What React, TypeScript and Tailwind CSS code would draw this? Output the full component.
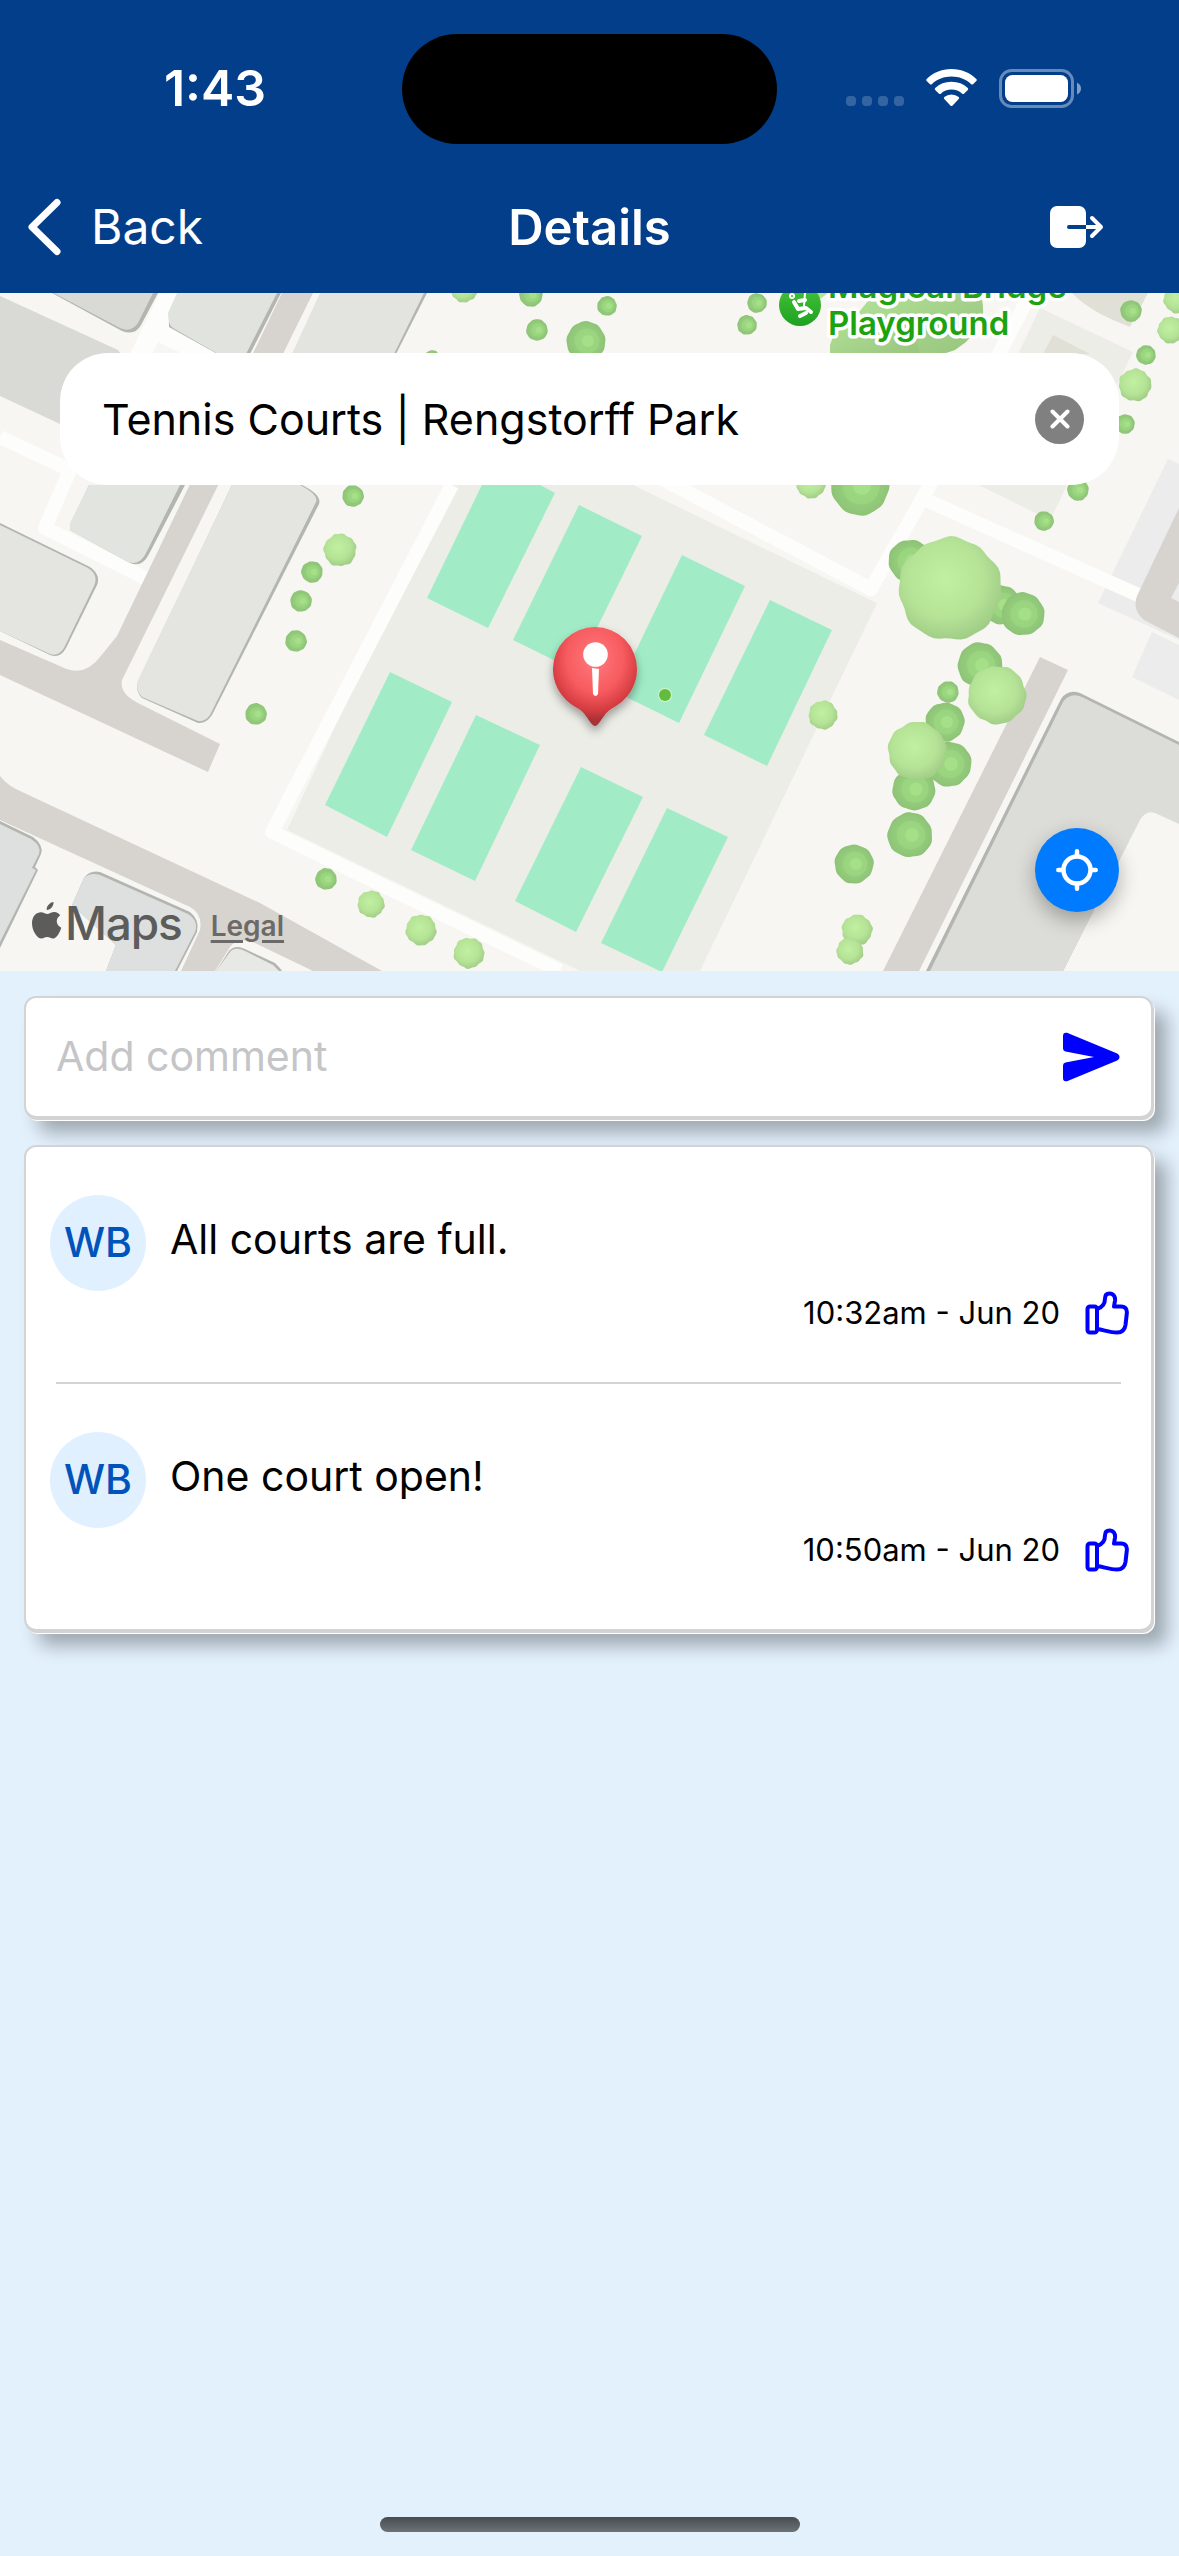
import React from 'react';

type Tree = [x: number, y: number, r: number];

const CONIFERS: Tree[] = [
  [353, 496, 11], [312, 572, 11], [301, 601, 11], [296, 641, 11], [256, 714, 11], [326, 879, 11],
  [531, 295, 12], [537, 330, 11], [607, 306, 10], [586, 341, 20], [757, 303, 10], [747, 325, 10], [432, 358, 8],
  [860, 486, 30], [1131, 311, 11], [1146, 355, 10], [1125, 424, 10], [1078, 490, 11], [1044, 521, 10],
  [910, 561, 22], [1002, 605, 20], [1023, 614, 22], [980, 665, 23], [948, 692, 11], [945, 722, 20],
  [949, 764, 23], [914, 789, 22], [910, 835, 23], [854, 864, 20],
];

const BROADLEAVES: Tree[] = [
  [340, 550, 17], [371, 904, 14], [421, 930, 16], [469, 953, 16], [464, 289, 14], [811, 484, 15],
  [1178, 299, 15], [1171, 330, 14], [1135, 385, 17], [950, 589, 53], [997, 695, 30], [917, 751, 30],
  [823, 715, 15], [857, 930, 16], [850, 951, 14],
];

const COURTS = [
  '494,460 555,493 488,628 427,598',
  '579,505 642,536 576,671 513,640',
  '682,555 745,586 679,723 616,692',
  '770,600 832,630 767,766 704,735',
  '390,672 452,702 387,837 325,805',
  '476,715 540,745 475,881 411,850',
  '581,767 643,797 576,932 515,901',
  '667,808 728,837 662,972 601,943',
];

function crown([cx, cy, r]: Tree, lobes: number, depth: number) {
  const points: string[] = [];
  for (let i = 0; i < 60; i++) {
    const a = (i / 60) * Math.PI * 2;
    const k = r * (1 - depth + depth * Math.sin(a * lobes + cx) * Math.cos(a * 3 + cy));
    points.push(`${(cx + k * Math.cos(a)).toFixed(1)},${(cy + k * Math.sin(a)).toFixed(1)}`);
  }
  return points.join(' ');
}

function MapCanvas() {
  return (
    <svg
      className="absolute inset-0 h-full w-full"
      viewBox="0 293 1179 678"
      preserveAspectRatio="xMidYMid slice"
      role="img"
      aria-label="Map of the tennis courts at Rengstorff Park"
    >
      <defs>
        <radialGradient id="conifer" cx="0.5" cy="0.5" r="0.52">
          <stop offset="0" stopColor="#a9e08b" />
          <stop offset="0.3" stopColor="#9ad37f" />
          <stop offset="1" stopColor="#8dc276" />
        </radialGradient>
        <radialGradient id="leafy" cx="0.45" cy="0.42" r="0.6">
          <stop offset="0" stopColor="#c1f0a1" />
          <stop offset="0.6" stopColor="#b6e497" />
          <stop offset="1" stopColor="#a0cc86" />
        </radialGradient>
        <linearGradient id="grove" x1="0" y1="0" x2="1" y2="1">
          <stop offset="0" stopColor="#b4e297" />
          <stop offset="1" stopColor="#96c47e" />
        </linearGradient>
        <radialGradient id="pin" cx="0.5" cy="0.32" r="0.62">
          <stop offset="0" stopColor="#ff7a7e" />
          <stop offset="0.55" stopColor="#f75b5f" />
          <stop offset="0.85" stopColor="#d43c41" />
          <stop offset="1" stopColor="#a83036" />
        </radialGradient>
        <linearGradient id="poi" x1="0" y1="0" x2="0" y2="1">
          <stop offset="0" stopColor="#47c43a" />
          <stop offset="1" stopColor="#1ea021" />
        </linearGradient>
        <filter id="pinShadow" x="-30%" y="-30%" width="160%" height="160%">
          <feDropShadow dx="0" dy="5" stdDeviation="5" floodOpacity="0.35" />
        </filter>
      </defs>

      <rect y="293" width="1179" height="678" fill="#f7f6f2" />

      <g fill="#ecede7">
        <path d="M448 485L287 830L580 971H700L877 603L637 487L560 440Z" />
        <path d="M1040 308L1133 352L1050 520L960 476Z" />
      </g>
      <path d="M1072 293C1088 310 1110 319 1130 327L1148 293ZM1053 335L1090 354H1043Z" fill="#e0e0d6" />
      <g fill="#ececed">
        <path d="M1168 459L1179 464V640L1098 603Z" />
        <path d="M1152 632L1179 645V700L1132 677Z" />
      </g>

      <g fill="none" stroke="#fdfdfb" strokeWidth="14" strokeLinejoin="round">
        <path d="M175 285L138 360M152 328L260 380" strokeWidth="20" />
        <path d="M0 437L70 470L45 528L145 578M70 470L90 440" />
        <path d="M452 485L272 832L560 971" />
        <path d="M655 475L871 589L930 485L1035 285M926 500L1145 598" />
        <path d="M0 288L125 347" stroke="#f7f6f2" />
      </g>

      <g fill="#d7d3cf">
        <path d="M282 293H313L122 680Q119 694 140 704L220 744L208 772L0 675V640L62 667Q84 678 100 657L117 636Z" />
        <path d="M0 776Q8 786 20 791L260 903L382 971H313L255 943Q238 936 230 947L215 971H181L200 930Q203 914 190 907L0 820Z" />
        <path d="M1040 657L1068 670L919 971H883Z" />
        <path d="M1179 508L1137 596Q1132 610 1144 620L1179 638V602L1171 598L1179 583Z" />
      </g>

      <g fill="#b3b5b0">
        <path d="M52 293L122 331Q135 336 141 325L158 293Z" />
        <path d="M178 293L169 313V327L221 356H249L281 293Z" />
        <path d="M322 293L293 356H395L427 293Z" />
        <path d="M232 485H302Q322 495 319 504L212 715Q206 724 198 723L142 698Q135 691 138 682Z" />
        <path d="M89 485L70 525V530L130 563Q142 568 149 554L185 485Z" />
        <path d="M0 523L90 567Q101 575 97 585L66 648Q60 659 50 655L0 631Z" />
        <path d="M0 821L33 837Q44 845 41 854L35 867L38 870L0 948Z" />
        <path d="M84 878Q90 870 100 872L190 912Q200 920 197 932L177 971H106L116 945L72 905Z" />
        <path d="M216 971L229 951Q235 944 245 949L275 963Q281 969 282 971Z" />
        <path d="M1179 742L1080 693Q1068 689 1061 699L926 971H1063L1140 818Q1146 808 1155 811L1179 821Z" />
      </g>
      <path d="M50 291L120 328Q131 333 138 323L154 291Z" fill="#d9dad5" />
      <path d="M0 296L118 350Q125 357 119 366L60 424L0 396Z" fill="#d9dad5" />
      <path d="M178 291L168 313Q168 325 173 328L218 354H246L278 291Z" fill="#e1e3de" />
      <path d="M321 291L291 356H393L425 291Z" fill="#e3e4df" />
      <path d="M232 485H300Q319 495 316 502L210 715Q205 722 198 721L142 697Q135 690 138 680Z" fill="#e4e5e0" />
      <path d="M89 485L70 523V530L128 562Q140 566 146 553L180 485Z" fill="#e2e4df" />
      <path d="M0 525L88 568Q99 575 94 586L64 648Q58 657 50 654L0 631Z" fill="#e4e5e0" />
      <path d="M0 824L31 839Q42 846 39 854L32 868L36 870L0 942Z" fill="#dde0df" />
      <path d="M84 878Q90 872 100 875L188 914Q199 921 195 932L175 971H106L116 945L72 905Z" fill="#dde0df" />
      <path d="M216 971L230 952Q235 946 245 951L273 965L279 971Z" fill="#e8e8e4" />
      <path d="M1179 745L1082 697Q1070 692 1063 702L930 971H1063L1140 820Q1146 810 1155 813L1179 824Z" fill="#dcddd8" />

      <g fill="#a1ecc7">
        {COURTS.map((points) => (
          <polygon key={points} points={points} />
        ))}
      </g>

      {CONIFERS.map((tree) => (
        <g key={tree.join()}>
          <polygon points={crown(tree, 6, 0.03)} fill="url(#conifer)" />
          <circle cx={tree[0] + 1} cy={tree[1]} r={tree[2] * 0.62} fill="#9bd780" opacity="0.7" />
          <circle cx={tree[0] + 2} cy={tree[1]} r={tree[2] * 0.3} fill="#a5df88" />
        </g>
      ))}
      {BROADLEAVES.map((tree) => (
        <polygon key={tree.join()} points={crown(tree, 8, tree[2] > 25 ? 0.035 : 0.05)} fill="url(#leafy)" />
      ))}
      <path d="M812 293L820 299L828 293Z" fill="#b4e297" />
      <path d="M859 312L872 296L895 285H975Q984 297 983 313Q978 330 966 342L955 350L940 355H915L880 340Z" fill="url(#grove)" />
      <path d="M830 358V345Q834 330 846 322L880 314Q905 318 915 335L921 358Z" fill="url(#grove)" />

      <circle cx="800" cy="305" r="21" fill="url(#poi)" />
      <g fill="none" stroke="#fff" strokeWidth="4" strokeLinecap="round" strokeLinejoin="round">
        <path d="M794 302L798 309L806 308L811 312M799 301L805 300M800 316L806 313" />
        <circle cx="792" cy="296" r="1" />
        <path d="M805 293L804 306" strokeWidth="2" />
      </g>
      <g
        className="font-['Inter',sans-serif] font-semibold"
        fontSize="33"
        fill="#1ca30f"
        stroke="#fff"
        strokeWidth="7"
        strokeLinejoin="round"
        paintOrder="stroke"
      >
        <text x="828" y="298">Magical Bridge</text>
        <text x="828" y="335">Playground</text>
      </g>

      <circle cx="665" cy="695" r="7" fill="#d4f3d0" />
      <circle cx="665" cy="695" r="6" fill="#62bd3c" />
      <g filter="url(#pinShadow)">
        <path
          d="M595 627A42 42 0 0 1 637 669C637 688 625 702 611 709C604 713 599 726 595 726S586 713 579 709C565 702 553 688 553 669A42 42 0 0 1 595 627Z"
          fill="url(#pin)"
        />
      </g>
      <circle cx="595.5" cy="654.5" r="12.3" fill="#fff" />
      <path d="M592 668L599 669L598 694Q595.500 698 593 694Z" fill="#fff" />
    </svg>
  );
}

function StatusBar() {
  return (
    <div className="grid h-[178px] grid-cols-[1fr_375px_1fr] items-center">
      <span className="pb-[2px] pl-[28px] text-center text-[50px] leading-none font-semibold">1:43</span>
      <div className="h-[110px] rounded-full bg-black" />
      <div className="flex items-center pb-[2px] pl-[69px]">
        <div className="flex gap-[6px] pt-[25px]">
          {[0, 1, 2, 3].map((i) => (
            <span key={i} className="h-[10px] w-[10px] rounded-[4px] bg-white/20" />
          ))}
        </div>
        <svg className="ml-[22px] h-[38px] w-[51px]" viewBox="0 0 51 38" fill="#fff" aria-label="Wi-Fi">
          <path d="M25.500 0C35.500 0 44 3.800 50.300 10Q51.300 11 50.300 12L47 15.200Q46.200 16 45.200 15.200C39.800 10.300 33 7.600 25.500 7.600S11.200 10.300 5.800 15.200Q4.800 16 4 15.200L.7 12Q-.3 11 .7 10C7 3.800 15.500 0 25.500 0Z" />
          <path d="M25.500 12.800C32 12.800 37.500 15 41.800 19Q42.700 20 41.800 21L38 24.700Q37.200 25.500 36.200 24.700C33.200 22 29.700 20.600 25.500 20.600S17.800 22 14.800 24.700Q13.800 25.500 13 24.700L9.200 21Q8.300 20 9.200 19C13.500 15 19 12.800 25.500 12.800Z" />
          <path d="M25.500 25.500Q29.700 25.500 32.700 28Q33.700 29 32.700 30L26.400 36.700Q25.500 37.500 24.600 36.700L18.300 30Q17.300 29 18.300 28Q21.300 25.500 25.500 25.500Z" />
        </svg>
        <svg className="ml-[22px] h-[39px] w-[83px]" viewBox="0 0 83 39" aria-label="Battery">
          <rect x="1.500" y="1.500" width="72" height="36" rx="11" fill="none" stroke="#fff" strokeOpacity="0.4" strokeWidth="3" />
          <rect x="6" y="6" width="63" height="27" rx="7.500" fill="#fff" />
          <path d="M78 13.500Q82 15.500 82 19.500T78 25.500Z" fill="#fff" fillOpacity="0.5" />
        </svg>
      </div>
    </div>
  );
}

function NavBar() {
  return (
    <nav className="grid h-[115px] grid-cols-3 items-center pb-[17px]">
      <button className="flex items-center gap-[27px] pl-[26px] text-[48px] leading-none">
        <svg className="h-[58px] w-[38px]" viewBox="0 0 38 58" fill="none" stroke="#fff" strokeWidth="7" strokeLinecap="round" strokeLinejoin="round">
          <path d="M31 4.500L6 29L31 53.500" />
        </svg>
        Back
      </button>
      <h1 className="text-center text-[49px] leading-none font-semibold">Details</h1>
      <button className="mr-[75px] justify-self-end" aria-label="Log out">
        <svg className="h-[42px] w-[54px]" viewBox="0 0 54 42" fill="none" strokeLinecap="round" strokeLinejoin="round">
          <rect width="36" height="42" rx="7" fill="#fff" />
          <path d="M19 21H36" stroke="#023e8a" strokeWidth="4" />
          <path d="M36 21H51" stroke="#fff" strokeWidth="4" strokeLinecap="butt" />
          <path d="M42 12L51 21L42 30" stroke="#fff" strokeWidth="4" />
        </svg>
      </button>
    </nav>
  );
}

function MapSection() {
  return (
    <section className="relative flex h-[678px] flex-col overflow-hidden px-[60px] pt-[60px]">
      <MapCanvas />
      <div className="relative flex h-[132px] shrink-0 items-center rounded-[48px] bg-white pr-[35px] pl-[42px]">
        <input
          className="min-w-0 flex-1 bg-transparent text-[43px] text-black outline-none"
          aria-label="Search location"
          defaultValue="Tennis Courts | Rengstorff Park"
        />
        <button className="flex h-[49px] w-[49px] items-center justify-center rounded-full bg-[#808080]" aria-label="Clear search">
          <svg className="h-[20px] w-[20px]" viewBox="0 0 20 20" stroke="#fff" strokeWidth="4" strokeLinecap="round">
            <path d="M2.500 2.500L17.500 17.500M17.500 2.500L2.500 17.500" />
          </svg>
        </button>
      </div>
      <div className="absolute bottom-[20px] left-[32px] flex items-center text-[#5c5c5a]">
        <svg className="mb-[4px] h-[38px] w-[30px]" viewBox="0 0 30 38" fill="currentColor" aria-label="Apple">
          <path d="M21.500 0C21.900 3.900 18.500 8 14.700 7.900C14.300 4.100 17.900.4 21.500 0ZM28.200 13.300C23.100 16.600 23.900 23.300 29.300 25.700C27.900 29.900 24.700 36.300 21.300 36.500C18.800 36.600 18 35.100 15.200 35.100S11.700 36.600 9.300 36.600C5.800 36.600 0 29.500 0 21.200C0 14 4.600 10.200 8.900 10.200C11.700 10.200 13.800 12 15.400 12S19.300 10 22.500 10C24.700 10 26.900 11.300 28.200 13.300Z" />
        </svg>
        <span className="pl-[3px] text-[46px] leading-[56px] font-medium tracking-tight">Maps</span>
        <a
          href="#legal"
          className="pt-[5px] pl-[29px] text-[28px] leading-none font-semibold text-[#6b6a68] underline decoration-[3px] underline-offset-4"
        >
          Legal
        </a>
      </div>
      <button
        className="absolute right-[60px] bottom-[59px] flex h-[84px] w-[84px] items-center justify-center rounded-full bg-[#007aff] shadow-[0_8px_20px_rgba(0,0,0,0.3)]"
        aria-label="Centre on my location"
      >
        <svg className="h-[42px] w-[42px]" viewBox="0 0 42 42" fill="none" stroke="#fff" strokeWidth="4.500" strokeLinecap="round">
          <circle cx="21" cy="21" r="13.500" />
          <path d="M21 2.300V7M21 35V39.700M2.300 21H7M35 21H39.700" />
        </svg>
      </button>
    </section>
  );
}

const CARD =
  'rounded-[12px] border-2 border-[#d3d3d3] bg-white shadow-[1px_2px_0_#d3d3d3,2px_3px_0_#ffffff,14px_15px_18px_rgba(0,0,0,0.3)]';

function CommentForm() {
  return (
    <form className={`flex h-[122px] items-center pr-[31px] pl-[30px] ${CARD}`}>
      <input
        className="min-w-0 flex-1 bg-transparent text-[41px] text-black outline-none placeholder:text-[#c5c5c7]"
        aria-label="Add comment"
        placeholder="Add comment"
      />
      <button type="button" aria-label="Send comment">
        <svg className="h-[50px] w-[58px]" viewBox="0 0 58 50" fill="#0000ff">
          <path d="M1 4Q1 0 5 .8L54 21Q57.500 22.600 57.500 25T54 29L5 49.200Q1 50 1 46V33.500Q1 31 3.500 30.600L32 25L3.500 19.400Q1 19 1 16.500Z" />
        </svg>
      </button>
    </form>
  );
}

interface Comment {
  initials: string;
  text: string;
  time: string;
}

const COMMENTS: Comment[] = [
  { initials: 'WB', text: 'All courts are full.', time: '10:32am - Jun 20' },
  { initials: 'WB', text: 'One court open!', time: '10:50am - Jun 20' },
];

function CommentItem({ initials, text, time }: Comment) {
  return (
    <li className="flex h-[235px] flex-col pt-[48px]">
      <div className="flex pl-[24px]">
        <span className="flex h-[96px] w-[96px] items-center justify-center rounded-full bg-[#e0f0ff] text-[41px] font-medium text-[#0053ba]">
          {initials}
        </span>
        <p className="pt-[17px] pl-[24px] text-[41px] leading-[54px] text-black">{text}</p>
      </div>
      <div className="flex items-center justify-end gap-[25px] pr-[22px]">
        <time className="text-[31px] leading-[42px] text-black">{time}</time>
        <button aria-label="Like comment">
          <svg className="h-[44px] w-[44px]" viewBox="0 0 44 44" fill="none" stroke="#0000ff" strokeWidth="4" strokeLinejoin="round">
            <rect x="2.500" y="15.500" width="9.500" height="26" rx="2.500" />
            <path d="M12 18C17 16.500 20 12.500 20 7.500C20 4 21.500 2.500 24.500 2.500C28.500 2.500 30.500 6 30 9.500L29 15.500H36C40.500 15.500 42.300 18.500 41.800 22.500L40.500 34C39.800 39 37.500 41.500 32 41.500C25 41.500 19 39 12 38" />
          </svg>
        </button>
      </div>
    </li>
  );
}

export default function App() {
  return (
    <div className="flex min-h-screen flex-col bg-[#e3f1fd] font-['Inter','Liberation_Sans',sans-serif]">
      <header className="bg-[#023e8a] text-white">
        <StatusBar />
        <NavBar />
      </header>
      <MapSection />
      <main className="flex flex-col gap-[27px] overflow-hidden pt-[25px] pr-[26px] pb-[50px] pl-[24px]">
        <CommentForm />
        <ul className={`pb-[10px] ${CARD}`}>
          {COMMENTS.map((comment, index) => (
            <React.Fragment key={comment.time}>
              {index > 0 && <li role="separator" className="mx-[30px] h-[2px] bg-[#d3d3d3]" />}
              <CommentItem {...comment} />
            </React.Fragment>
          ))}
        </ul>
      </main>
      <div className="mt-auto mb-[24px] h-[15px] w-[420px] self-center rounded-full bg-linear-to-b from-[#474c50] to-[#6c7479]" />
    </div>
  );
}
